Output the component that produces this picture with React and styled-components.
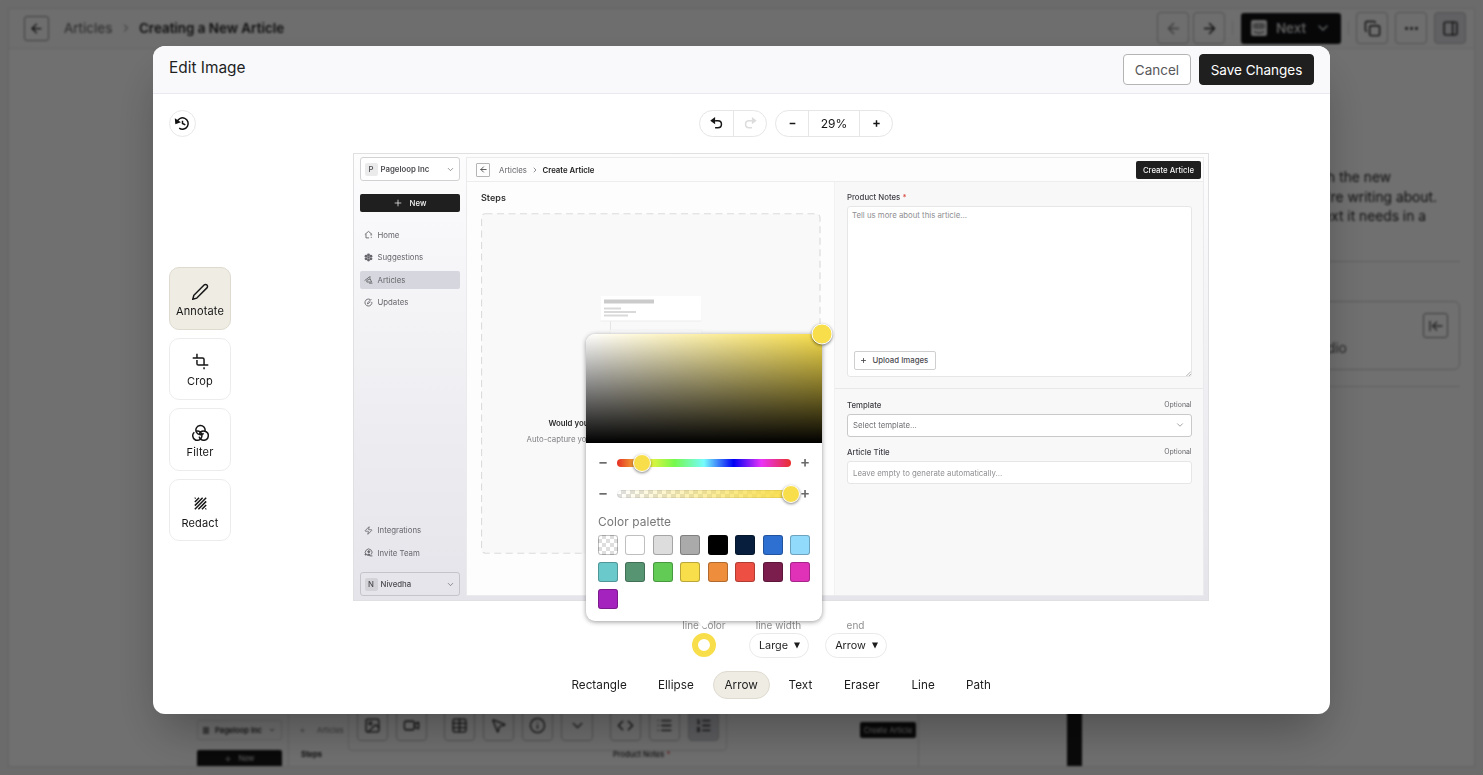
import React from 'react';
import styled, { createGlobalStyle, css } from 'styled-components';
import {
  ArrowLeft, ArrowRight, ChevronRight, ChevronDown, Copy, Ellipsis, PanelRight,
  Image, Video, Table, MousePointer2, Info, Code, List, ListOrdered, Plus,
  Zap, ArrowLeftToLine,
} from 'lucide-react';

const fontStack = 'Inter, "Liberation Sans", sans-serif';

const flexCenter = css`
  display: flex;
  align-items: center;
  justify-content: center;
`;

const GlobalStyle = createGlobalStyle`
  * { box-sizing: border-box; }

  body {
    margin: 0;
    overflow: hidden;
    background: #f6f6f7;
    font-family: ${fontStack};
    color: #1f1f1f;
  }

  p, h1, h2, h3 { margin: 0; font-weight: inherit; }

  button { font-family: inherit; padding: 0; cursor: pointer; }

  svg { display: block; flex: none; }
`;

/* ---------- page behind the dialog ---------- */

const articleTools = [
  { icon: Image }, { icon: Video, gapAfter: 17 },
  { icon: Table }, { icon: MousePointer2 }, { icon: Info }, { icon: ChevronDown, gapAfter: 17 },
  { icon: Code }, { icon: List }, { icon: ListOrdered, active: true },
];

const ArticlePage = () => (
  <Page>
    <Panel>
      <PageHeader>
        <BackButton><ArrowLeft size={15} /></BackButton>
        <CrumbLink>Articles</CrumbLink>
        <ChevronRight size={12} color="#666" />
        <CrumbCurrent>Creating a New Article</CrumbCurrent>
        <HeaderTools>
          <SquareButton faded><ArrowLeft size={17} /></SquareButton>
          <SquareButton><ArrowRight size={17} /></SquareButton>
          <HeaderRule />
          <NextButton>
            <IntercomMark />
            Next
            <ChevronDown size={16} />
          </NextButton>
          <HeaderRule />
          <SquareButton><Copy size={17} /></SquareButton>
          <SquareButton wide><Ellipsis size={17} /></SquareButton>
          <SquareButton wide active><PanelRight size={17} /></SquareButton>
        </HeaderTools>
      </PageHeader>
      <PageBody>
        <Editor>
          <EmbeddedShot>
            <ShotNav>
              <ShotWorkspace>
                <ShotBadge />
                Pageloop Inc
                <ChevronDown size={8} />
              </ShotWorkspace>
              <ShotNew>
                <Plus size={8} />
                New
              </ShotNew>
            </ShotNav>
            <ShotMain>
              <ShotTop>
                <Plus size={7} />
                <span>Articles</span>
                <ShotCreate>Create Article</ShotCreate>
              </ShotTop>
              <ShotLabels>
                <b>Steps</b>
                <ShotNotes>
                  Product Notes
                  <em> *</em>
                </ShotNotes>
              </ShotLabels>
            </ShotMain>
          </EmbeddedShot>
          <FloatingTools>
            {articleTools.map(({ icon: ToolIcon, active, gapAfter }, i) => (
              <FloatingTool key={i} active={active} gapAfter={gapAfter}>
                <ToolIcon size={17} strokeWidth={1.8} />
              </FloatingTool>
            ))}
          </FloatingTools>
        </Editor>
        <BlackStrip />
        <NotesColumn>
          <NotesText>
            <NotesLine end={69}>with the new</NotesLine>
            <NotesLine end={23}>you&apos;re writing about.</NotesLine>
            <NotesLine end={34}>context it needs in a</NotesLine>
          </NotesText>
          <NotesCardArea>
            <NotesCard>
              <span>Studio</span>
              <InsertButton><ArrowLeftToLine size={16} /></InsertButton>
            </NotesCard>
          </NotesCardArea>
        </NotesColumn>
      </PageBody>
    </Panel>
  </Page>
);

const IntercomMark = () => (
  <svg width="16" height="16" viewBox="0 0 16 16">
    <rect width="16" height="16" rx="2" fill="#f2f2f2" />
    <path d="M3 3.5v5M5.500 3v6M8 2.800v6.400M10.500 3v6M13 3.500v5M3 11.500c3 2 7 2 10 0" stroke="#202124" strokeWidth="1" fill="none" />
  </svg>
);

const Page = styled.div`
  height: 775px;
  padding: 8px;
  background: #f3f3f5;
  filter: blur(0.9px);
`;

const Panel = styled.div`
  height: 759px;
  overflow: hidden;
  display: flex;
  flex-direction: column;
  border: 1px solid #e2e2e2;
  background: #fff;
`;

const PageHeader = styled.header`
  height: 40px;
  flex: none;
  display: flex;
  align-items: center;
  padding: 0 8px 1px 15px;
  border-bottom: 1px solid #e6e6e6;
  background: #fafafa;
`;

const BackButton = styled.div`
  ${flexCenter};

  width: 25px;
  height: 25px;
  margin-right: 15px;
  border: 1px solid #8e8e8e;
  border-radius: 3px;
`;

const CrumbLink = styled.span`
  width: 56px;
  font-size: 13.500px;
  color: #5c5c5c;
`;

const CrumbCurrent = styled.span`
  margin-left: 7px;
  font-size: 13.400px;
  font-weight: 600;
`;

const HeaderTools = styled.div`
  margin-left: auto;
  display: flex;
  align-items: center;
`;

const SquareButton = styled.div`
  ${flexCenter};

  width: 32px;
  height: 32px;
  margin-left: ${({ wide }) => (wide ? '7px' : '4px')};
  border: 1px solid #bbb;
  border-radius: 4px;
  color: ${({ faded }) => (faded ? '#888' : '#222')};
  background: ${({ active }) => (active ? '#dcdce2' : 'transparent')};
`;

const HeaderRule = styled.div`
  width: 1px;
  height: 14px;
  margin: 0 3px 0 7px;
  background: #ddd;
`;

const NextButton = styled.div`
  ${flexCenter};

  width: 100px;
  height: 31px;
  gap: 9px;
  margin-left: 5px;
  border-radius: 3px;
  background: #101114;
  color: #e8e8e8;
  font-size: 13.500px;
  font-weight: 500;
`;

const PageBody = styled.div`
  flex: 1;
  min-height: 0;
  display: flex;
`;

const Editor = styled.div`
  width: 1058px;
  padding: 665px 0 0 182px;
  position: relative;
`;

const EmbeddedShot = styled.div`
  width: 728px;
  height: 60px;
  display: flex;
  border-right: 1px solid #ddd;
  font-size: 7.500px;
`;

const ShotNav = styled.div`
  width: 98px;
  padding: 6px 6px 0;
  border-right: 1px solid #e4e4e4;
`;

const ShotWorkspace = styled.div`
  height: 20px;
  padding: 0 5px;
  display: flex;
  align-items: center;
  justify-content: space-between;
  border: 1px solid #ddd;
  border-radius: 2px;
  font-weight: 600;
`;

const ShotBadge = styled.i`
  width: 6px;
  height: 7px;
  background: #888;
`;

const ShotNew = styled.div`
  ${flexCenter};

  height: 17px;
  gap: 6px;
  margin-top: 10px;
  border-radius: 2px;
  background: #151515;
  color: #ddd;
`;

const ShotMain = styled.div`
  flex: 1;
`;

const ShotTop = styled.div`
  height: 32px;
  display: flex;
  align-items: center;
  gap: 11px;
  padding: 0 2px 0 10px;
  color: #777;
`;

const ShotCreate = styled.div`
  ${flexCenter};

  width: 56px;
  height: 16px;
  margin-left: auto;
  border-radius: 2px;
  background: #151515;
  color: #ddd;
`;

const ShotLabels = styled.div`
  display: flex;
  padding: 4px 0 0 12px;
`;

const ShotNotes = styled.span`
  margin-left: 291px;
  font-weight: 500;

  em { color: #d33; }
`;

const FloatingTools = styled.div`
  position: absolute;
  left: 339px;
  top: 649px;
  display: flex;
  padding: 4px 7px 9px 8px;
  height: 53px;
  align-items: flex-end;
  border: 1px solid #ddd;
  border-radius: 4px;
  background: #fff;
`;

const FloatingTool = styled.div`
  ${flexCenter};

  width: 31.100px;
  height: 32px;
  margin-right: ${({ gapAfter }) => gapAfter || 8}px;
  border: 1px solid #bbb;
  border-radius: 4px;
  background: ${({ active }) => (active ? '#d5d6de' : '#fff')};

  &:last-child { margin-right: 0; }
`;

const BlackStrip = styled.div`
  width: 15px;
  background: #171717;
`;

const NotesColumn = styled.aside`
  flex: 1;
  padding: 119px 14px 0 0;
  text-align: right;
`;

const NotesText = styled.div`
  height: 94px;
  border-bottom: 1px solid #d6d6d6;
`;

const NotesLine = styled.p`
  padding-right: ${({ end }) => end}px;
  font-size: 13.800px;
  line-height: 19.700px;
`;

const NotesCardArea = styled.div`
  height: 125px;
  padding-top: 39px;
  border-bottom: 1px solid #ddd;
`;

const NotesCard = styled.div`
  height: 69px;
  display: flex;
  justify-content: flex-end;
  gap: 76px;
  padding: 11px 11px 0 0;
  border: 1px solid #ccc;
  border-radius: 6px;
  color: #555;
  font-size: 14px;

  span { padding-top: 26px; }
`;

const InsertButton = styled.div`
  ${flexCenter};

  width: 25px;
  height: 25px;
  border: 1px solid #888;
  border-radius: 3px;
`;

/* ---------- editor dialog ---------- */

const modes = [
  {
    label: 'Annotate',
    active: true,
    icon: <path d="M17.086 2.914a2.828 2.828 0 1 1 4 4l-14.500 14.500-5.500 1.500 1.500-5.500 14.500-14.500z" />,
  },
  {
    label: 'Crop',
    icon: <path d="M23 17H9a2 2 0 0 1-2-2v-5m0-3V1M1 7h14a2 2 0 0 1 2 2v7m0 4v3" />,
  },
  {
    label: 'Filter',
    icon: <path d="M18.347 9.907a6.500 6.500 0 1 0-1.872 3.306M3.260 11.574a6.500 6.500 0 1 0 2.815-1.417M10.150 17.897A6.503 6.503 0 0 0 16.500 23a6.500 6.500 0 1 0-6.183-8.510" />,
  },
  {
    label: 'Redact',
    icon: <path d="M4 5l1-1M4 10l6-6M4 15L15 4M4 20L20 4M9 20L20 9M14 20l6-6M19 20l1-1" />,
  },
];

const EditorIcon = ({ size = 17, children }) => (
  <svg width={size} height={size} viewBox="0 0 24 24" fill="none" stroke="currentColor" strokeWidth="2.100">
    {children}
  </svg>
);

const shapes = ['Rectangle', 'Ellipse', 'Arrow', 'Text', 'Eraser', 'Line', 'Path'];
const shapeWidths = [80, 60, 57, 48, 61, 48, 49];

const palette = [
  null, '#ffffff', '#dddddd', '#aaaaaa', '#000000', '#071f3d', '#2e70d2', '#92dafc',
  '#69c9cb', '#579572', '#61cb55', '#f8de4b', '#ee8d3c', '#ed5042', '#7b1e4e', '#df32b9',
  '#a422bd',
];

const ColorPopover = () => (
  <Popover>
    <Spectrum>
      <Knob size={21} x={235.500} y={0} />
    </Spectrum>
    <SliderRow>
      <Step>−</Step>
      <HueTrack><Knob size={18} x={25} y={4} /></HueTrack>
      <Step>+</Step>
    </SliderRow>
    <SliderRow>
      <Step>−</Step>
      <AlphaTrack><Knob size={18} x={173.500} y={4} /></AlphaTrack>
      <Step>+</Step>
    </SliderRow>
    <PaletteTitle>Color palette</PaletteTitle>
    <Palette>
      {palette.map((color) => <Swatch key={color || 'none'} color={color} />)}
    </Palette>
    <PopoverTip viewBox="0 0 14 8"><path d="M0 0h14L7 8z" fill="#fff" /></PopoverTip>
  </Popover>
);

const App = () => (
  <>
    <GlobalStyle />
    <ArticlePage />
    <Overlay>
      <Dialog>
        <DialogHeader>
          <DialogTitle>Edit Image</DialogTitle>
          <CancelButton type="button">Cancel</CancelButton>
          <SaveButton type="button">Save Changes</SaveButton>
        </DialogHeader>
        <TopBar>
          <HistoryButton type="button">
            <EditorIcon>
              <path d="M7.388 18.538a8 8 0 1 0-2.992-9.030" />
              <path fill="currentColor" d="M2.794 11.696L2.370 6.714l5.088 3.180z" />
              <path d="M12 8v4l4 2" />
            </EditorIcon>
          </HistoryButton>
          <TopControls>
            <PillGroup>
              <PillCell width={33}>
                <EditorIcon>
                  <path d="M10 8h4c3 0 5 2 5 5s-2 5-5 5h-4" />
                  <path fill="currentColor" d="M5 8l4-3v6z" />
                </EditorIcon>
              </PillCell>
              <PillCell width={33} disabled>
                <EditorIcon>
                  <path d="M14 8h-4c-3 0-5 2-5 5s2 5 5 5h4" />
                  <path fill="currentColor" d="M19 8l-4-3v6z" />
                </EditorIcon>
              </PillCell>
            </PillGroup>
            <PillGroup>
              <PillCell width={32}><EditorIcon><path d="M8 12h8" /></EditorIcon></PillCell>
              <PillCell width={51}>29%</PillCell>
              <PillCell width={33}><EditorIcon><path d="M12 7.500v9M7.500 12h9" /></EditorIcon></PillCell>
            </PillGroup>
          </TopControls>
        </TopBar>
        <Workspace>
          <ModeList>
            {modes.map(({ label, active, icon }) => (
              <ModeButton key={label} type="button" active={active}>
                <EditorIcon>{icon}</EditorIcon>
                {label}
              </ModeButton>
            ))}
          </ModeList>
          <Stage>
            <EditedImage />
            <StyleBar>
              <StyleField width={57}>
                <span>line color</span>
                <ColorRing />
              </StyleField>
              <StyleField width={60}>
                <span>line width</span>
                <SelectPill>
                  Large
                  <Caret />
                </SelectPill>
              </StyleField>
              <StyleField width={62}>
                <span>end</span>
                <SelectPill>
                  Arrow
                  <Caret />
                </SelectPill>
              </StyleField>
            </StyleBar>
            <ShapeBar>
              {shapes.map((shape, i) => (
                <ShapeButton key={shape} type="button" width={shapeWidths[i]} active={shape === 'Arrow'}>
                  {shape}
                </ShapeButton>
              ))}
            </ShapeBar>
          </Stage>
        </Workspace>
        <ColorPopover />
      </Dialog>
    </Overlay>
  </>
);

const Caret = () => (
  <svg width="6" height="7" viewBox="0 0 6 7"><path d="M0 0.500h6L3 6.500z" fill="#1c1c1c" /></svg>
);

const Overlay = styled.div`
  position: fixed;
  inset: 0;
  padding: 46px 153px 61px;
  background: rgba(0, 0, 0, 0.56);
`;

const Dialog = styled.div`
  position: relative;
  height: 668px;
  display: flex;
  flex-direction: column;
  border-radius: 12px;
  background: #fff;
  box-shadow: 0 24px 50px -10px rgba(0, 0, 0, 0.32);
`;

const DialogHeader = styled.header`
  height: 48px;
  flex: none;
  display: flex;
  align-items: center;
  padding: 0 16px;
  border-bottom: 1px solid #e9e9ef;
  border-radius: 12px 12px 0 0;
  background: #f9f9fc;
`;

const DialogTitle = styled.h1`
  flex: 1;
  padding-bottom: 4px;
  font-size: 15.400px;
`;

const CancelButton = styled.button`
  width: 68px;
  height: 31px;
  border: 1px solid #b4b4b4;
  border-radius: 4px;
  background: #fff;
  color: #58585a;
  font-size: 13.500px;
`;

const SaveButton = styled(CancelButton)`
  width: 115px;
  margin-left: 8px;
  border-color: #1f1f1f;
  background: #1f1f1f;
  color: #fff;
`;

const TopBar = styled.div`
  height: 43px;
  display: flex;
  align-items: flex-end;
  padding: 0 16px;
`;

const HistoryButton = styled.button`
  ${flexCenter};

  width: 27px;
  height: 27px;
  border: 1px solid #e8e8e8;
  border-radius: 50%;
  background: #fff;
  color: #111;
`;

const TopControls = styled.div`
  display: flex;
  gap: 8px;
  margin-left: 503px;
`;

const PillGroup = styled.div`
  display: flex;
  height: 27px;
  border: 1px solid #e6e6e6;
  border-radius: 14px;
`;

const PillCell = styled.div`
  ${flexCenter};

  width: ${({ width }) => width}px;
  font-size: 12px;
  color: ${({ disabled }) => (disabled ? '#dcdcdc' : '#161616')};

  & + & { border-left: 1px solid #e6e6e6; }
`;

const Workspace = styled.div`
  flex: 1;
  display: flex;
  padding: 16px 16px 0;
`;

const ModeList = styled.div`
  width: 62px;
  display: flex;
  flex-direction: column;
  gap: 8px;
  padding-top: 114px;
`;

const ModeButton = styled.button`
  ${flexCenter};

  flex-direction: column;
  height: 62.600px;
  padding-top: 5px;
  gap: 4px;
  border: 1px solid ${({ active }) => (active ? '#dedad0' : '#ececec')};
  border-radius: 10px;
  background: ${({ active }) => (active ? '#efece4' : '#fff')};
  color: #161616;
  font-size: 11px;
  line-height: 15px;
  letter-spacing: 0.150px;
`;

const Stage = styled.div`
  flex: 1;
  display: flex;
  flex-direction: column;
  align-items: center;
  padding-left: 17px;
`;

const StyleBar = styled.div`
  display: flex;
  justify-content: center;
  gap: 16px;
  margin-top: 18px;
`;

const StyleField = styled.div`
  width: ${({ width }) => width}px;
  display: flex;
  flex-direction: column;
  align-items: center;
  white-space: nowrap;
  font-size: 10px;
  line-height: 13px;
  color: #8f8f8f;
`;

const ColorRing = styled.div`
  width: 24px;
  height: 24px;
  margin-top: 1px;
  border: 6px solid #f8de4b;
  border-radius: 50%;
`;

const SelectPill = styled.div`
  ${flexCenter};

  width: 100%;
  height: 25px;
  margin-top: 1px;
  padding-left: 2px;
  gap: 6px;
  border: 1px solid #e9e9e9;
  border-radius: 13px;
  color: #1c1c1c;
  font-size: 10.800px;
`;

const ShapeBar = styled.div`
  display: flex;
  gap: 6.800px;
  margin-top: 13px;
`;

const ShapeButton = styled.button`
  width: ${({ width }) => width}px;
  height: 28px;
  border: 1px solid ${({ active }) => (active ? '#dedad0' : 'transparent')};
  border-radius: 14px;
  background: ${({ active }) => (active ? '#efece4' : 'transparent')};
  color: #1c1c1c;
  font-size: 11.700px;
  letter-spacing: 0.050px;
`;

/* popover opened from the line colour ring */
const Popover = styled.div`
  position: absolute;
  left: 433px;
  top: 288px;
  width: 236px;
  height: 287px;
  border-radius: 9px 0 9px 9px;
  background: #fff;
  box-shadow: 0 1px 5px rgba(0, 0, 0, 0.4);
`;

const Spectrum = styled.div`
  position: relative;
  height: 109px;
  margin-bottom: 11px;
  border-radius: 9px 0 0 0;
  background: linear-gradient(to top, #000, transparent), linear-gradient(to right, #fff, #f8de4b);
`;

const Knob = styled.i`
  position: absolute;
  left: ${({ x }) => x}px;
  top: ${({ y }) => y}px;
  width: ${({ size }) => size}px;
  height: ${({ size }) => size}px;
  transform: translate(-50%, -50%);
  border: 1px solid #fff;
  border-radius: 50%;
  background: #f8de4b;
  box-shadow: 0 1px 3px rgba(0, 0, 0, 0.5);
`;

const SliderRow = styled.div`
  height: 18px;
  margin-bottom: 13px;
  display: flex;
  align-items: center;
  justify-content: space-between;
  padding: 0 11px;
`;

const Step = styled.span`
  width: 12px;
  line-height: 16px;
  padding-bottom: 2px;
  text-align: center;
  font-size: 15px;
  font-weight: 600;
  color: #6a6a6a;
`;

const HueTrack = styled.div`
  position: relative;
  width: 174px;
  height: 8px;
  border-radius: 4px;
  background: linear-gradient(to right, #e63024, #f8f33e 17%, #75f94c 33%, #75fbfd 50%, #0000f5 67%, #ea33f7 83%, #e7302a);
`;

const AlphaTrack = styled(HueTrack)`
  box-shadow: inset 0 0 0 1px rgba(0, 0, 0, 0.06);
  background:
    linear-gradient(to right, transparent, #f8de4b),
    repeating-conic-gradient(#dedede 0 25%, #fff 0 50%) 0 0 / 9px 8px;
`;

const PaletteTitle = styled.p`
  margin-top: -2.500px;
  padding: 0 12px;
  font-size: 11.900px;
  line-height: 15px;
  letter-spacing: 0.100px;
  color: #777;
`;

const Palette = styled.div`
  display: grid;
  grid-template-columns: repeat(8, 20px);
  gap: 7.450px;
  padding: 6px 12px 0;
`;

const Swatch = styled.div`
  height: 20px;
  border-radius: 3px;
  box-shadow: inset 0 0 0 1px rgba(0, 0, 0, 0.25);
  background: ${({ color }) => color || 'repeating-conic-gradient(#dedede 0 25%, #fff 0 50%) 0 0 / 8px 8px'};
`;

const PopoverTip = styled.svg`
  position: absolute;
  left: 111px;
  top: 286px;
  width: 14px;
  height: 8px;
`;

/* ---------- image being edited ---------- */

const navIcons = {
  home: <path d="M1.500 8L8 2.500 14.500 8M3.500 7v7H9M12.500 7v3M12 13h2" />,
  suggestions: (
    <g fill="currentColor" stroke="none">
      <circle cx="8" cy="3.400" r="2.600" />
      <circle cx="3.700" cy="5.600" r="2.600" />
      <circle cx="12.300" cy="5.600" r="2.600" />
      <circle cx="3.700" cy="10.400" r="2.600" />
      <circle cx="12.300" cy="10.400" r="2.600" />
      <circle cx="8" cy="12.600" r="2.600" />
      <circle cx="8" cy="8" r="2.200" />
    </g>
  ),
  articles: <path d="M1 10L9.500 3.500M10.500 2v4.500M5 9.500l6-2.500 2.500 5.500H5zM9 14.500h6" />,
  updates: <path d="M11 2.700A6.200 6.200 0 1 0 14 7M6 10.500l1-2.500 6-6M6 10.500l2.500-1 3-3" />,
  invite: (
    <g>
      <path d="M4 12a6 6 0 1 1 9-.5" />
      <circle cx="8.500" cy="6.500" r="1.800" fill="currentColor" />
      <path d="M6 13c0-3 5-3 5 0zM1 11.500h4M3 9.500v4M10 14h5" fill="currentColor" />
    </g>
  ),
};

const NavIcon = ({ name }) => (
  <svg width="9" height="9" viewBox="0 0 16 16" fill="none" stroke="currentColor" strokeWidth="1.600">
    {navIcons[name]}
  </svg>
);

const EditedImage = () => (
  <Shot>
    <Side>
      <AccountBox>
        <Initial>P</Initial>
        <strong>Pageloop Inc</strong>
        <ChevronDown size={9} strokeWidth={1.500} />
      </AccountBox>
      <NewButton>
        <Plus size={10} strokeWidth={1.800} />
        New
      </NewButton>
      <NavItem><NavIcon name="home" />Home</NavItem>
      <NavItem><NavIcon name="suggestions" />Suggestions</NavItem>
      <NavItem active><NavIcon name="articles" />Articles</NavItem>
      <NavItem><NavIcon name="updates" />Updates</NavItem>
      <SideBottom>
        <NavItem><Zap size={9} strokeWidth={2.200} />Integrations</NavItem>
        <NavItem><NavIcon name="invite" />Invite Team</NavItem>
      </SideBottom>
      <AccountBox muted>
        <Initial>N</Initial>
        <span>Nivedha</span>
        <ChevronDown size={9} strokeWidth={1.500} />
      </AccountBox>
    </Side>
    <Sheet>
      <SheetHeader>
        <SmallBack><ArrowLeft size={9} strokeWidth={2.300} /></SmallBack>
        <span>Articles</span>
        <ChevronRight size={8} strokeWidth={2.200} />
        <strong>Create Article</strong>
        <CreateButton>Create Article</CreateButton>
      </SheetHeader>
      <SheetBody>
        <StepsPane>
          <h2>Steps</h2>
          <DropZone>
            <svg width="340" height="341" viewBox="0 0 340 341">
              <rect x="0.500" y="0.750" width="338.500" height="339.500" rx="4" fill="#f9f9f9" stroke="#dcdcdc" strokeWidth="1.200" strokeDasharray="7 4.500" />
              <path d="M129.500 108v40" stroke="#e4e4e4" />
              <rect x="119.500" y="83.500" width="101" height="25" fill="#ededed" />
              <rect x="119.500" y="83" width="101" height="24.500" fill="#fff" />
              <rect x="123" y="86.500" width="50" height="4" fill="#cbcbcb" />
              <path d="M123 95.500h17M123 99h32M123 102.500h24" stroke="#d9d9d9" strokeWidth="1.800" />
              <rect x="129" y="117" width="92" height="24" fill="#fbfbfb" stroke="#f3f3f3" />
            </svg>
            <DropText>
              <strong>Would you</strong>
              <span>Auto-capture you</span>
            </DropText>
          </DropZone>
        </StepsPane>
        <FormPane>
          <NotesBlock>
            <FieldLabel>
              <strong>
                Product Notes
                <em> *</em>
              </strong>
            </FieldLabel>
            <NotesInput>
              Tell us more about this article...
              <UploadButton>
                <Plus size={7} strokeWidth={3} />
                Upload Images
              </UploadButton>
              <ResizeGrip viewBox="0 0 6 6"><path d="M0.500 6L6 0.500M3.500 6L6 3.500" stroke="#888" strokeWidth="0.800" /></ResizeGrip>
            </NotesInput>
          </NotesBlock>
          <FieldsBlock>
            <FieldLabel>
              <strong>Template</strong>
              Optional
            </FieldLabel>
            <FieldBox outlined>
              Select template...
              <ChevronDown size={10} strokeWidth={1.500} />
            </FieldBox>
            <FieldLabel>
              <strong>Article Title</strong>
              Optional
            </FieldLabel>
            <FieldBox>Leave empty to generate automatically...</FieldBox>
          </FieldsBlock>
        </FormPane>
      </SheetBody>
    </Sheet>
  </Shot>
);

const Shot = styled.div`
  width: 856px;
  height: 448px;
  flex: none;
  display: flex;
  padding-right: 4px;
  border: 1px solid #e0e0e2;
  background: linear-gradient(#fdfdfe, #f6f6f8 25%, #e4e4ea);
  font-size: 7.800px;
  color: #66666c;

  strong { font-weight: 600; }
`;

const Side = styled.nav`
  width: 112px;
  display: flex;
  flex-direction: column;
  padding: 3px 6.500px 4px 5.500px;
`;

const AccountBox = styled.div`
  height: 24px;
  flex: none;
  display: flex;
  align-items: center;
  gap: 3px;
  padding: 0 4px;
  border: 1px solid ${({ muted }) => (muted ? '#c4c4ca' : '#d2d2d4')};
  border-radius: 3px;
  background: ${({ muted }) => (muted ? 'transparent' : '#fff')};
  font-weight: 500;
  color: #4b4b50;

  svg { margin-left: auto; }
`;

const Initial = styled.span`
  ${flexCenter};

  width: 13px;
  height: 13px;
  border-radius: 2px;
  background: rgba(0, 0, 0, 0.08);
`;

const NewButton = styled.div`
  ${flexCenter};

  height: 18px;
  flex: none;
  gap: 7px;
  margin: 13px 0 13.500px;
  border-radius: 2px;
  background: #1f1f1f;
  color: #f2f2f2;
  font-weight: 500;
`;

const NavItem = styled.div`
  height: 18px;
  flex: none;
  display: flex;
  align-items: center;
  gap: 4.500px;
  margin-bottom: 4.650px;
  padding-left: 4.500px;
  border-radius: 2px;
  background: ${({ active }) => (active ? '#d6d6de' : 'transparent')};
`;

const SideBottom = styled.div`
  margin: auto 0 5.500px;
`;

const Sheet = styled.div`
  flex: 1;
  min-width: 0;
  display: flex;
  flex-direction: column;
  margin: 3px 0 4px;
  border: 1px solid #ebebed;
  background: #fdfdfd;
`;

const SheetHeader = styled.div`
  height: 24px;
  flex: none;
  display: flex;
  align-items: center;
  padding: 0 2px 0 9px;
  border-bottom: 1px solid #ededee;

  span { width: 32px; }

  strong {
    margin-left: 3.500px;
    color: #222;
  }
`;

const SmallBack = styled.div`
  ${flexCenter};

  width: 14px;
  height: 14px;
  margin-right: 9px;
  border: 1px solid #b5b5b5;
  border-radius: 1px;
  color: #444;
`;

const CreateButton = styled.div`
  ${flexCenter};

  width: 65px;
  height: 18px;
  margin-left: auto;
  border-radius: 2px;
  background: #1f1f1f;
  color: #f2f2f2;
  font-weight: 500;
`;

const SheetBody = styled.div`
  flex: 1;
  min-height: 0;
  display: flex;
`;

const StepsPane = styled.div`
  width: 367px;
  padding: 10px 0 0 14px;

  h2 {
    margin-bottom: 9px;
    font-size: 9px;
    line-height: 12px;
    font-weight: 600;
    color: #333;
  }
`;

const DropZone = styled.div`
  display: grid;
  width: 340px;

  > * { grid-area: 1 / 1; }
`;

const DropText = styled.div`
  padding: 204px 0 0 45.500px;
  line-height: 12px;
  color: #808084;

  strong, span { display: block; }

  strong {
    margin-bottom: 4px;
    padding-left: 22px;
    color: #2c2c2c;
  }
`;

const FormPane = styled.div`
  flex: 1;
  border-left: 1px solid #f1f1f1;
  background: #f8f8f8;
`;

const NotesBlock = styled.div`
  height: 207px;
  padding: 9px 11.500px 0 12px;
  border-bottom: 1px solid #e8e8e8;
`;

const FieldsBlock = styled.div`
  padding: 9.500px 11.500px 0 12px;
`;

const FieldLabel = styled.div`
  display: flex;
  justify-content: space-between;
  line-height: 12px;
  font-size: 6.900px;

  strong {
    font-size: 7.800px;
    font-weight: 500;
    color: #3d3d44;
  }

  em {
    color: #d8473f;
    font-style: normal;
  }
`;

const NotesInput = styled.div`
  position: relative;
  height: 171px;
  display: flex;
  flex-direction: column;
  align-items: flex-start;
  justify-content: space-between;
  margin-top: 2.500px;
  padding: 3px 5px 6px 4px;
  border: 1px solid #e6e6e6;
  border-radius: 3px;
  background: #fff;
  color: #8f8f93;
`;

const UploadButton = styled.div`
  display: flex;
  align-items: center;
  gap: 6px;
  width: 82px;
  height: 19px;
  margin-left: 1.500px;
  padding-left: 5px;
  border: 1px solid #cfcfcf;
  border-radius: 2px;
  color: #4b4b50;
  font-weight: 500;
`;

const ResizeGrip = styled.svg`
  position: absolute;
  right: 0;
  bottom: 0;
  width: 5px;
  height: 5px;
`;

const FieldBox = styled.div`
  height: 23px;
  display: flex;
  align-items: center;
  justify-content: space-between;
  margin: 3px 0 9.500px;
  padding: 0 6px 0 5px;
  border: 1px solid ${({ outlined }) => (outlined ? '#c9c9c9' : '#e6e6e6')};
  border-radius: 3px;
  background: #fff;
  color: ${({ outlined }) => (outlined ? '#6f6f74' : '#8f8f93')};
`;

export default App;
